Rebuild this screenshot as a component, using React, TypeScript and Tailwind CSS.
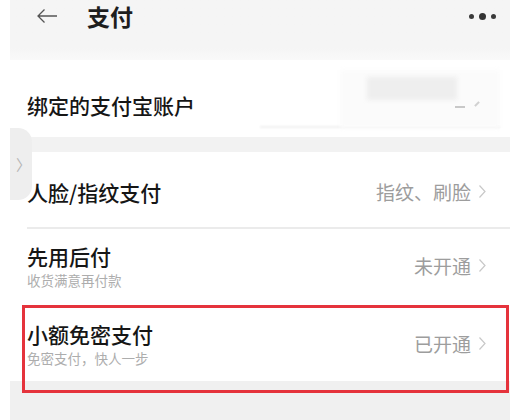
const font = { fontFamily: '"Noto Sans CJK SC", "Noto Sans", sans-serif' };

function Chevron() {
  return (
    <svg width="9" height="15" viewBox="0 0 9 15" className="ml-[7px] shrink-0">
      <path d="M1.5 1.5 L7 7.5 L1.5 13.5" fill="none" stroke="#c8c8c8" strokeWidth="1.2" />
    </svg>
  );
}

function Row({
  title,
  sub,
  value,
  className = '',
}: {
  title: string;
  sub?: string;
  value: string;
  className?: string;
}) {
  return (
    <div className={`flex items-center justify-between bg-white pl-[17px] pr-[23px] ${className}`}>
      <div className="flex flex-col">
        <span className="text-[21px] leading-[26px] font-medium text-[#161616]">{title}</span>
        {sub && <span className="mt-[3px] text-[13.5px] leading-[17px] text-[#adadad]">{sub}</span>}
      </div>
      <div className="flex items-center">
        <span className="text-[19px] leading-[24px] text-[#9d9d9d]">{value}</span>
        <Chevron />
      </div>
    </div>
  );
}

export default function App() {
  return (
    <div className="w-[516px] h-[420px] bg-white pl-[10px] pr-[6px] overflow-hidden" style={font}>
      <div className="relative flex flex-col h-full bg-[#f1f1f1]">
        {/* header */}
        <div className="flex items-start h-[60px] bg-gradient-to-b from-[#f5f5f5] from-80% to-[#f9f9f9] pl-[26px] pr-[14px] pt-[3px]">
          <svg width="22" height="16" viewBox="0 0 22 16" className="mt-[5px]">
            <path d="M21 8 H2 M8.5 1.5 L2 8 L8.5 14.5" fill="none" stroke="#555" strokeWidth="1.3" />
          </svg>
          <span className="ml-[29px] text-[23px] leading-[26px] font-bold text-[#1e1e1e]">支付</span>
          <div className="ml-auto mt-[10px] flex items-center gap-[5px]">
            <span className="w-[5px] h-[5px] rounded-full bg-[#3a3a3a]" />
            <span className="w-[7px] h-[7px] rounded-full bg-[#333]" />
            <span className="w-[5px] h-[5px] rounded-full bg-[#3a3a3a]" />
          </div>
        </div>

        {/* bound account */}
        <div className="relative flex items-center h-[77px] bg-white pl-[17px] pt-[12px]">
          <span className="text-[21px] leading-[26px] font-medium text-[#161616]">绑定的支付宝账户</span>
          <div className="absolute left-[250px] right-[10px] top-[66px] h-[2px] bg-[#f0f0f0] blur-[1px]" />
          <div className="absolute left-[330px] top-[10px] w-[160px] h-[58px] bg-[#fbfbfb] blur-[2px]" />
          <div className="absolute left-[357px] top-[17px] w-[90px] h-[23px] bg-[#eeeeee] blur-[2px]" />
          <div className="absolute left-[445px] top-[46px] w-[10px] h-[2px] bg-[#c8c8c8] blur-[0.5px]" />
          <div className="absolute left-[466px] top-[41px] w-[2px] h-[6px] bg-[#d0d0d0] rotate-45 blur-[0.5px]" />
        </div>

        <div className="h-[15px] bg-[#f2f2f2]" />

        <Row title="人脸/指纹支付" value="指纹、刷脸" className="h-[75px] pt-[4px]" />
        <div className="bg-white pl-[17px]">
          <div className="h-[1.5px] bg-[#ebebeb]" />
        </div>
        <Row title="先用后付" sub="收货满意再付款" value="未开通" className="h-[74px]" />
        <Row title="小额免密支付" sub="免密支付，快人一步" value="已开通" className="h-[78px] pt-[4px]" />

        <div className="flex-1 bg-[#f0f0f0]" />

        {/* side handle */}
        <div className="absolute left-0 top-[128px] w-[22px] h-[72px] rounded-r-[14px] bg-[#eeeeee] flex items-center pl-[6px]">
          <span className="text-[15px] text-[#b5b5b5] leading-none">〉</span>
        </div>

        {/* highlight box */}
        <div className="absolute left-[12px] right-[1px] top-[305px] h-[88px] border-[3px] border-[#e5333c]" />
      </div>
    </div>
  );
}
